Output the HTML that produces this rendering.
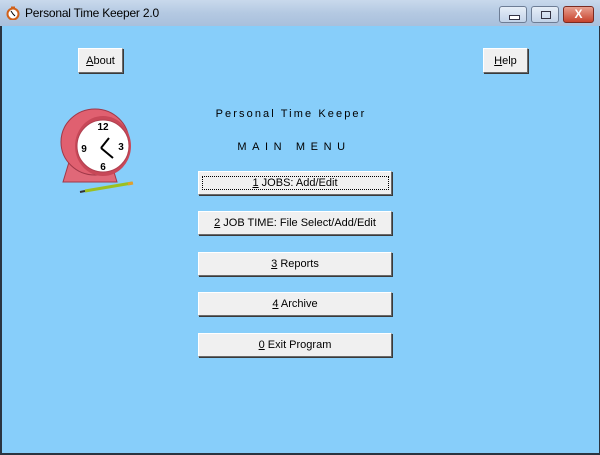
<!DOCTYPE html>
<html><head><style>
body{margin:0;width:600px;height:455px;overflow:hidden;font-family:"Liberation Sans",sans-serif;background:#7a8aa0}
.win{position:absolute;left:0;top:0;width:600px;height:455px;background:#87cefa}
.tb{position:absolute;left:0;top:0;width:600px;height:26px;background:linear-gradient(#c9d9ec,#b4c9e2 50%,#a9c0dc);}
.tb span{position:absolute;left:25px;top:6px;font-size:12px;color:#000;letter-spacing:-0.2px}
.lb{position:absolute;left:0;top:26px;width:2px;height:429px;background:#2a3440}
.rb{position:absolute;right:0;top:26px;width:1px;height:429px;background:#2a3440}
.bb{position:absolute;left:0;bottom:0;width:600px;height:2px;background:#2a3440}
.btn{position:absolute;background:#f0f0f0;border:1px solid #fff;border-right-color:#6a6a6a;border-bottom-color:#6a6a6a;box-shadow:1px 1px 0 #3a3a3a;font-size:11px;text-align:center;box-sizing:border-box;color:#000}
.m{left:198px;width:194px;height:24px;line-height:23px}
.t{position:absolute;font-size:11px;color:#000;text-align:center;width:300px;left:141px}
.cb{position:absolute;top:6px;height:17px;border:1px solid #6d7d95;border-radius:3px;background:linear-gradient(#e6eef8,#c3d3e8);box-sizing:border-box}
</style></head><body><div class="win">
<div class="tb">
<svg style="position:absolute;left:6px;top:6px" width="14" height="14"><circle cx="7" cy="8" r="5.5" fill="#fff" stroke="#d0601a" stroke-width="2"/><path d="M7 8 L5 5 M7 8 L9 10" stroke="#000" stroke-width="1"/><rect x="5" y="0.5" width="4" height="2" fill="#d0601a"/></svg>
<span>Personal Time Keeper 2.0</span>
<div class="cb" style="left:499px;width:28px"><div style="position:absolute;left:9px;top:8px;width:9px;height:3px;border:1px solid #334;background:#fff"></div></div>
<div class="cb" style="left:531px;width:28px"><div style="position:absolute;left:9px;top:4px;width:8px;height:6px;border:1px solid #334"></div></div>
<div class="cb" style="left:563px;width:31px;background:linear-gradient(#e8a090,#c7432c);border-color:#7a2a20;color:#fff;font-weight:bold;font-size:12px;text-align:center;line-height:15px">X</div>
</div>
<div class="lb"></div><div class="rb"></div><div class="bb"></div>
<div class="btn" style="left:78px;top:48px;width:45px;height:25px;line-height:24px"><u>A</u>bout</div>
<div class="btn" style="left:483px;top:48px;width:45px;height:25px;line-height:24px"><u>H</u>elp</div>
<div class="t" style="top:108px;letter-spacing:2.1px">Personal Time Keeper</div>
<div class="t" style="top:141px;letter-spacing:5.6px;left:144px">MAIN MENU</div>
<svg style="position:absolute;left:55px;top:100px" width="90" height="95" viewBox="0 0 90 95">
<path d="M14 62 L8 82 L62 82 L56 62 Z" fill="#e06878" stroke="#a03848"/>
<ellipse cx="40" cy="42" rx="34" ry="33" fill="#e06070" stroke="#a03848"/>
<ellipse cx="48" cy="46" rx="28" ry="30" fill="#c84858"/>
<circle cx="48" cy="46" r="26" fill="#fff" stroke="#b04050"/>
<text x="48" y="30" font-size="10" font-weight="bold" text-anchor="middle" font-family="Liberation Sans">12</text>
<text x="66" y="50" font-size="10" font-weight="bold" text-anchor="middle" font-family="Liberation Sans">3</text>
<text x="48" y="70" font-size="10" font-weight="bold" text-anchor="middle" font-family="Liberation Sans">6</text>
<text x="29" y="52" font-size="10" font-weight="bold" text-anchor="middle" font-family="Liberation Sans">9</text>
<path d="M46 48 L54 38 M46 48 L58 58" stroke="#000" stroke-width="2"/>
<path d="M30 91 L77 83" stroke="#9cc020" stroke-width="3"/><path d="M25 92 L30 91" stroke="#333" stroke-width="2"/><path d="M73 84 L78 83" stroke="#e0a030" stroke-width="3"/>
</svg>
<div class="btn m" style="top:171px"><span style="outline:1px dotted #000;padding:0 50px"><u>1</u> JOBS: Add/Edit</span></div>
<div class="btn m" style="top:211px"><u>2</u> JOB TIME: File Select/Add/Edit</div>
<div class="btn m" style="top:252px"><u>3</u> Reports</div>
<div class="btn m" style="top:292px"><u>4</u> Archive</div>
<div class="btn m" style="top:333px"><u>0</u> Exit Program</div>
</div></body></html>
